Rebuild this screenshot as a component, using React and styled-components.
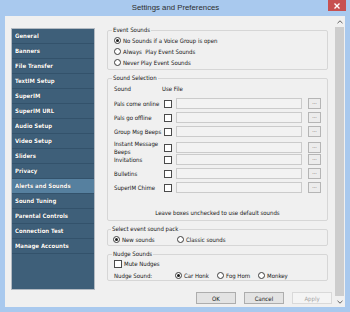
import React from "react";
import styled, { createGlobalStyle } from "styled-components";

const GlobalStyle = createGlobalStyle`
  html, body {
    margin: 0;
    padding: 0;
    background: #a9c9ee;
  }
  body {
    font-family: "DejaVu Sans Condensed", "DejaVu Sans", sans-serif;
    font-stretch: condensed;
    font-size: 6px;
    color: #141414;
  }
`;

const Window = styled.div`
  width: 350px;
  height: 312px;
  box-sizing: border-box;
  background: #a9c9ee;
  display: flex;
  flex-direction: column;
  padding: 0 5px 5px 5px;
`;

const TitleBar = styled.div`
  height: 16px;
  margin-right: -1px;
  display: grid;
  grid-template-columns: 1fr auto 1fr;
  align-items: start;
`;

const Title = styled.div`
  grid-column: 2;
  line-height: 16px;
  font-family: "Liberation Sans", Arial, sans-serif;
  font-size: 7.8px;
  color: #2d2d2d;
`;

const CloseButton = styled.div`
  grid-column: 3;
  justify-self: end;
  width: 18px;
  height: 11px;
  background: #c75050;
  display: flex;
  align-items: center;
  justify-content: center;
`;

const Inner = styled.div`
  flex: 1;
  display: flex;
  background: #f0f0f0;
  min-height: 0;
`;

const Main = styled.div`
  flex: 1;
  display: flex;
  align-items: flex-start;
  gap: 12px;
  padding: 10px 7px 0 6px;
`;

const Sidebar = styled.div`
  width: 84px;
  height: 262px;
  margin-top: 2px;
  box-sizing: border-box;
  border: 1px solid #b3bac2;
  background: #3e5f79;
`;

const NavItem = styled.div`
  height: 15px;
  box-sizing: border-box;
  border-bottom: 1px solid #33526b;
  padding-left: 3px;
  line-height: 14px;
  font-weight: bold;
  white-space: nowrap;
  color: #fff;
  text-shadow: 0 0 1px rgba(0, 0, 0, 0.6);
  background: ${(p) => (p.$active ? "#56809f" : "transparent")};
`;

const Panel = styled.div`
  width: 221px;
  display: flex;
  flex-direction: column;
  gap: 4px;
`;

const Group = styled.fieldset`
  margin: 0;
  min-width: 0;
  padding: ${(p) => p.$pad || "1px 6px 1px 6px"};
  border: 1px solid #d6d6d6;
  border-radius: 2px;
`;

const Legend = styled.legend`
  padding: 0 1px;
  margin-left: -2px;
  line-height: 8px;
`;

const OptionRow = styled.div`
  display: flex;
  align-items: center;
  height: ${(p) => p.$h || 11}px;
  margin-top: ${(p) => p.$mt || 0}px;
  white-space: nowrap;
`;

const Option = styled.div`
  display: flex;
  align-items: center;
  gap: 2px;
  width: ${(p) => (p.$w ? `${p.$w}px` : "auto")};
  flex-shrink: 0;
`;

const RadioDot = styled.span`
  width: 7px;
  height: 7px;
  box-sizing: border-box;
  border-radius: 50%;
  border: 1px solid #3c3c3c;
  background: #fff;
  display: flex;
  align-items: center;
  justify-content: center;
  flex-shrink: 0;
  &::after {
    content: "";
    width: 3px;
    height: 3px;
    border-radius: 50%;
    background: ${(p) => (p.$on ? "#1a1a1a" : "transparent")};
  }
`;

const Box = styled.span`
  width: 8px;
  height: 8px;
  box-sizing: border-box;
  border: 1px solid #4a4a4a;
  background: #fff;
  flex-shrink: 0;
`;

const HeaderRow = styled.div`
  display: flex;
  line-height: 8px;
  margin-bottom: 5px;
`;

const HeaderCell = styled.span`
  width: ${(p) => p.$w}px;
`;

const SoundRows = styled.div`
  display: flex;
  flex-direction: column;
  gap: 3px;
`;

const SoundRow = styled.div`
  display: grid;
  grid-template-columns: 46px 8px 126px 15px;
  column-gap: 4px;
  align-items: center;
  height: 11px;
`;

const SoundLabel = styled.span`
  line-height: 7.5px;
  white-space: nowrap;
`;

const FileField = styled.div`
  height: 11px;
  box-sizing: border-box;
  border: 1px solid #cbcbcb;
  background: #f2f2f2;
`;

const BrowseButton = styled.div`
  justify-self: end;
  width: 13px;
  height: 11px;
  box-sizing: border-box;
  border: 1px solid #b5b5b5;
  background: #ececec;
  font-size: 5px;
  line-height: 7px;
  text-align: center;
  color: #333;
`;

const Hint = styled.div`
  margin-top: 16px;
  line-height: 8px;
  text-align: center;
`;

const NudgeLabel = styled.span`
  width: 61px;
  flex-shrink: 0;
`;

const ButtonBar = styled.div`
  display: flex;
  justify-content: flex-end;
  gap: 8px;
  margin-top: 7px;
  margin-right: -4px;
`;

const Button = styled.div`
  width: 40px;
  height: 12px;
  box-sizing: border-box;
  border: 1px solid ${(p) => (p.$disabled ? "#d9d9d9" : "#adadad")};
  background: ${(p) => (p.$disabled ? "#f4f4f4" : "#e3e3e3")};
  color: ${(p) => (p.$disabled ? "#a3a3a3" : "#141414")};
  display: flex;
  align-items: center;
  justify-content: center;
`;

const Scrollbar = styled.div`
  width: 10px;
  display: flex;
  flex-direction: column;
  background: #f0f0f0;
`;

const ScrollArrow = styled.div`
  height: 11px;
  display: flex;
  align-items: center;
  justify-content: center;
`;

const ScrollThumb = styled.div`
  flex: 1;
  margin: 0 1px 0 0;
  background: #cdcdcd;
`;

const navItems = [
  "General",
  "Banners",
  "File Transfer",
  "TextIM Setup",
  "SuperIM",
  "SuperIM URL",
  "Audio Setup",
  "Video Setup",
  "Sliders",
  "Privacy",
  "Alerts and Sounds",
  "Sound Tuning",
  "Parental Controls",
  "Connection Test",
  "Manage Accounts",
];

const sounds = [
  ["Pals come online"],
  ["Pals go offline"],
  ["Group Msg Beeps"],
  ["Instant Message", "Beeps"],
  ["Invitations"],
  ["Bulletins"],
  ["SuperIM Chime"],
];

function Radio({ on, children, w }) {
  return (
    <Option $w={w}>
      <RadioDot $on={on} />
      <span>{children}</span>
    </Option>
  );
}

function Chevron({ down }) {
  return (
    <svg width="6" height="4" viewBox="0 0 6 4">
      <path
        d={down ? "M0.5 0.8 L3 3.2 L5.5 0.8" : "M0.5 3.2 L3 0.8 L5.5 3.2"}
        fill="none"
        stroke="#606060"
        strokeWidth="1"
      />
    </svg>
  );
}

export default function App() {
  return (
    <>
      <GlobalStyle />
      <Window>
        <TitleBar>
          <Title>Settings and Preferences</Title>
          <CloseButton>
            <svg width="6" height="6" viewBox="0 0 6 6">
              <path d="M0.5 0.5 L5.5 5.5 M5.5 0.5 L0.5 5.5" stroke="#fff" strokeWidth="1.4" />
            </svg>
          </CloseButton>
        </TitleBar>
        <Inner>
          <Main>
            <Sidebar>
              {navItems.map((item) => (
                <NavItem key={item} $active={item === "Alerts and Sounds"}>
                  {item}
                </NavItem>
              ))}
            </Sidebar>
            <Panel>
              <Group>
                <Legend>Event Sounds</Legend>
                <OptionRow>
                  <Radio on>No Sounds if a Voice Group is open</Radio>
                </OptionRow>
                <OptionRow>
                  <Radio>Always&nbsp; Play Event Sounds</Radio>
                </OptionRow>
                <OptionRow>
                  <Radio>Never Play Event Sounds</Radio>
                </OptionRow>
              </Group>

              <Group $pad="3px 6px 3px 6px">
                <Legend>Sound Selection</Legend>
                <HeaderRow>
                  <HeaderCell $w={48}>Sound</HeaderCell>
                  <span>Use File</span>
                </HeaderRow>
                <SoundRows>
                  {sounds.map((lines) => (
                    <SoundRow key={lines[0]}>
                      <SoundLabel>
                        {lines.map((l, i) => (
                          <React.Fragment key={l}>
                            {i > 0 && <br />}
                            {l}
                          </React.Fragment>
                        ))}
                      </SoundLabel>
                      <Box />
                      <FileField />
                      <BrowseButton>...</BrowseButton>
                    </SoundRow>
                  ))}
                </SoundRows>
                <Hint>Leave boxes unchecked to use default sounds</Hint>
              </Group>

              <Group $pad="1px 6px 1px 5px">
                <Legend>Select event sound pack</Legend>
                <OptionRow $h={10}>
                  <Radio on w={64}>New sounds</Radio>
                  <Radio>Classic sounds</Radio>
                </OptionRow>
              </Group>

              <Group $pad="1px 6px 0 6px">
                <Legend>Nudge Sounds</Legend>
                <OptionRow $h={9}>
                  <Option>
                    <Box />
                    <span>Mute Nudges</span>
                  </Option>
                </OptionRow>
                <OptionRow $h={10} $mt={2}>
                  <NudgeLabel>Nudge Sound:</NudgeLabel>
                  <Radio on w={42}>Car Honk</Radio>
                  <Radio w={41}>Fog Horn</Radio>
                  <Radio>Monkey</Radio>
                </OptionRow>
              </Group>

              <ButtonBar>
                <Button>OK</Button>
                <Button>Cancel</Button>
                <Button $disabled>Apply</Button>
              </ButtonBar>
            </Panel>
          </Main>
          <Scrollbar>
            <ScrollArrow>
              <Chevron />
            </ScrollArrow>
            <ScrollThumb />
            <ScrollArrow>
              <Chevron down />
            </ScrollArrow>
          </Scrollbar>
        </Inner>
      </Window>
    </>
  );
}
